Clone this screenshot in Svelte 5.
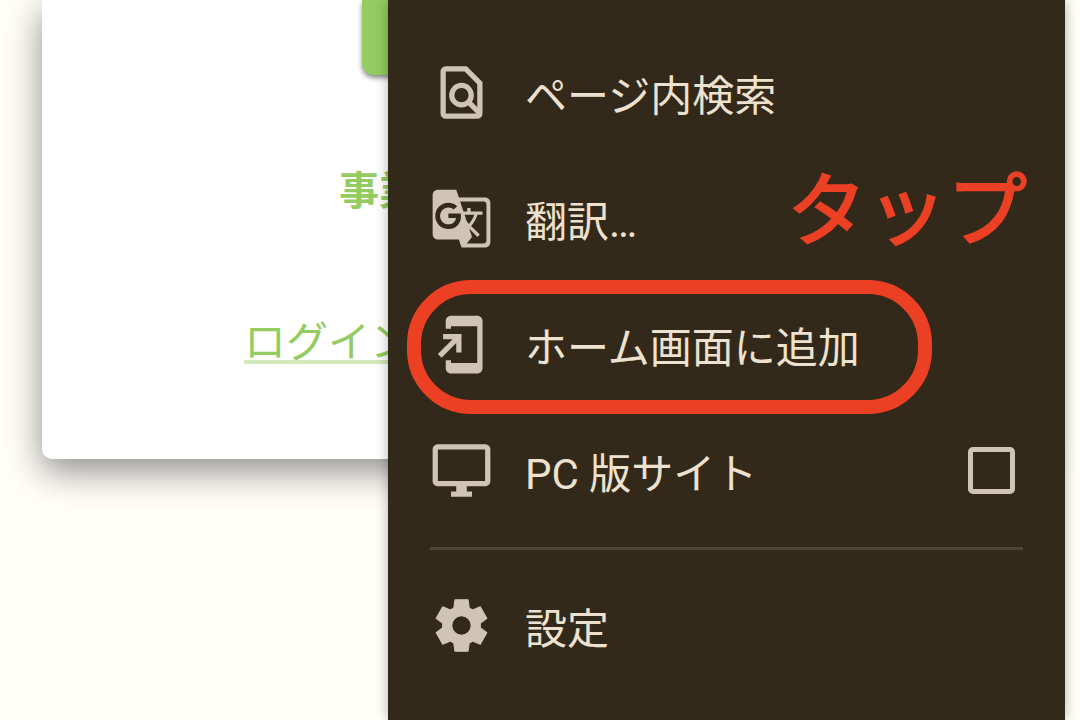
<script>
  let desktopSite = false;

  const items = [
    { id: 'find', label: 'ページ内検索' },
    { id: 'translate', label: '翻訳…' },
    { id: 'home', label: 'ホーム画面に追加' },
  ];
</script>

<main class="page">
  <section class="card">
    <button class="primary" type="button" aria-label="ログイン"></button>
    <h2>事業</h2>
    <a href="#login">ログイン</a>
  </section>

  <nav class="menu">
    {#each items as item}
      <button class="row" class:marked={item.id === 'home'} type="button">
        <svg class="icon" viewBox="0 0 24 24" aria-hidden="true">
          {#if item.id === 'find'}
            <g fill="none" stroke="currentColor" stroke-width="2">
              <path d="M6 3h7.6L19 8.4V20c0 .55-.45 1-1 1H6c-.55 0-1-.45-1-1V4c0-.55.45-1 1-1z" />
              <circle cx="12" cy="13" r="3.7" />
              <path d="M14.4 15.4l4.4 4.4" />
            </g>
          {:else if item.id === 'translate'}
            <path d="M21 4H11l-1-3H3c-1.1 0-2 .9-2 2v15c0 1.1.9 2 2 2h8l1 3h9c1.1 0 2-.9 2-2V6c0-1.1-.9-2-2-2zM7 16c-2.76 0-5-2.24-5-5s2.24-5 5-5c1.35 0 2.48.5 3.35 1.3L9.03 8.57c-.38-.36-1.04-.78-2.03-.78-1.74 0-3.15 1.44-3.15 3.21S5.26 14.21 7 14.21c2.01 0 2.84-1.44 2.92-2.41H7v-1.71h4.68c.07.31.12.61.12 1.02C11.8 13.97 9.89 16 7 16zm6.17-5.42h3.7c-.43 1.25-1.11 2.43-2.05 3.47-.31-.35-.6-.72-.86-1.1l-.79-2.37zm8.33 9.92c0 .55-.45 1-1 1H14l2-2.5-1.04-3.1 3.1 3.1.92-.92-3.3-3.25.02-.02c1.13-1.25 1.93-2.69 2.4-4.22H20v-1.3h-4.53V8h-1.29v1.29h-1.44L11.46 5.5h9.04c.55 0 1 .45 1 1v14z" />
          {:else}
            <path d="M18 1H8c-1.1 0-2 .9-2 2v3h2V5h10v14H8v-1H6v3c0 1.1.9 2 2 2h10c1.1 0 2-.9 2-2V3c0-1.1-.9-2-2-2zM10 15h2V8H5v2h3.59L3 15.59 4.41 17 10 11.41V15z" />
          {/if}
        </svg>
        <span>{item.label}</span>
      </button>
    {/each}

    <label class="row">
      <svg class="icon" viewBox="0 0 24 24" aria-hidden="true">
        <path d="M21 2H3c-1.1 0-2 .9-2 2v12c0 1.1.9 2 2 2h7v2H8v2h8v-2h-2v-2h7c1.1 0 2-.9 2-2V4c0-1.1-.9-2-2-2zm0 14H3V4h18v12z" />
      </svg>
      <span>PC 版サイト</span>
      <input type="checkbox" bind:checked={desktopSite} />
    </label>

    <hr />

    <button class="row" type="button">
      <svg class="icon" viewBox="0 0 24 24" aria-hidden="true">
        <path fill-rule="evenodd" stroke="currentColor" stroke-width=".4" stroke-linejoin="round" d="M9.5 21.8l-.45-3.2q-.5-.2-1.25-.7l-2.95 1.25-2.5-4.4 2.5-1.95q-.1-.8 0-1.6l-2.5-1.95 2.5-4.4L7.8 6.1q.7-.5 1.25-.7l.45-3.2h5l.45 3.2q.6.25 1.25.7l2.95-1.25 2.5 4.4-2.5 1.95q.1.8 0 1.6l2.5 1.95-2.5 4.4-2.95-1.25q-.7.5-1.25.7l-.45 3.2zM12 15.7a3.7 3.7 0 1 0 0-7.4 3.7 3.7 0 0 0 0 7.4z" />
      </svg>
      <span>設定</span>
    </button>

    <strong class="note">タップ</strong>
  </nav>
</main>

<style>
  :global(body) { background: #fffef9; }
  .page { position: relative; min-height: 100vh; font-family: Roboto, "Noto Sans CJK JP", sans-serif; font-size: 42px; line-height: 60px; overflow: hidden; }

  .card { box-sizing: border-box; margin: 0 42px; padding-bottom: 95px; background: #fff; border-radius: 0 0 10px 10px; box-shadow: 0 12px 36px rgba(0, 0, 0, 0.45); color: #93cc60; }
  .primary { display: block; width: 356px; height: 75px; margin: 0 auto; padding: 0; border: 0; border-radius: 0 0 12px 12px; background: #93cc60; box-shadow: 0 3px 5px rgba(0, 0, 0, 0.45); }
  h2 { margin: 87px 0 104px 297px; font-size: 40px; line-height: 60px; font-weight: 700; }
  .card a { display: table; margin-left: 202px; color: inherit; text-decoration: none; line-height: 34px; border-bottom: 4px solid #d2eabd; }

  .menu { position: absolute; top: 0; bottom: 0; left: 388px; right: 15px; box-sizing: border-box; padding: 29px 42px; background: #33291a; box-shadow: 0 0 12px rgba(0, 0, 0, 0.3); color: #ede1cf; }
  .row { position: relative; display: flex; align-items: center; gap: 32px; width: 100%; height: 126px; padding: 0; border: 0; background: none; color: inherit; font: inherit; text-align: left; cursor: pointer; }
  .row span { padding-top: 9px; }
  .icon { flex: none; width: 63px; height: 63px; fill: currentColor; color: #d0c5b4; }
  input { appearance: none; width: 47px; height: 47px; margin: 0 8px 0 auto; border: 5px solid #d0c5b4; border-radius: 5px; }
  input:checked { background: #d0c5b4; }
  hr { height: 3px; margin: 14px 0 12px; border: 0; background: #4d4538; }

  /* markers drawn over the menu */
  .marked::after { content: ""; position: absolute; top: -1px; left: -23px; box-sizing: border-box; width: 525px; height: 134px; border: 14px solid #ec4025; border-radius: 64px; }
  .note { position: absolute; top: 164px; right: 38px; font-size: 80px; line-height: 96px; font-weight: 400; color: #ec4025; -webkit-text-stroke: 2px #ec4025; }
</style>
